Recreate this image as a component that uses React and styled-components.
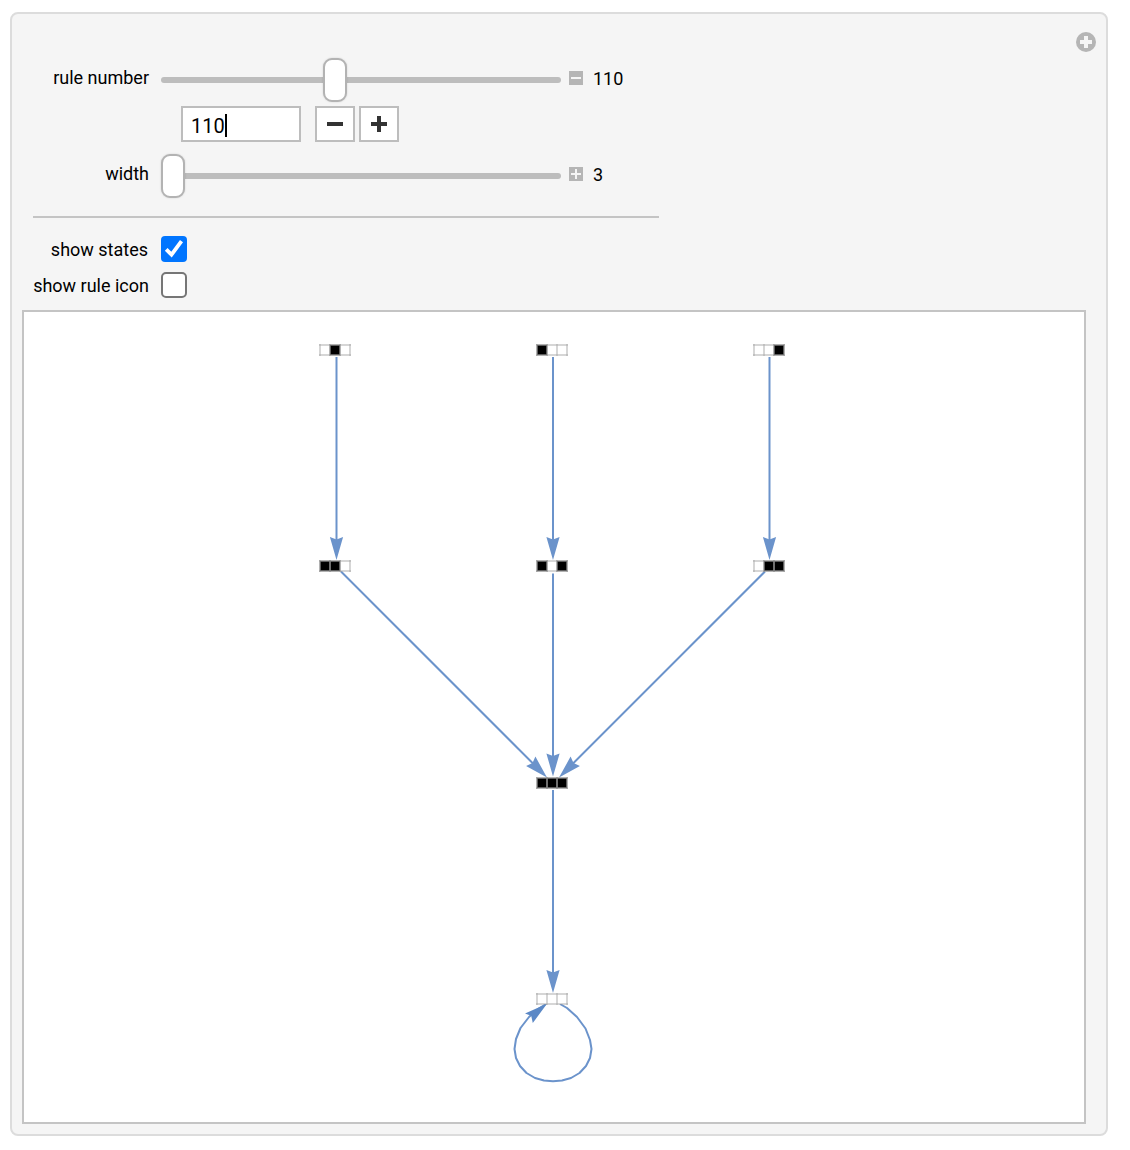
import React, { useState } from "react";
import styled, { createGlobalStyle } from "styled-components";

const GlobalStyle = createGlobalStyle`
  * { box-sizing: border-box; }
  body {
    margin: 0;
    background: #fff;
    color: #000;
    font-family: Roboto, "Liberation Sans", sans-serif;
    font-size: 18px;
  }
`;

const Panel = styled.main`
  width: 1098px;
  height: 1124px;
  margin: 12px 0 0 10px;
  padding: 44px 20px 0 10px;
  background: #f5f5f5;
  border: 2px solid #dcdcdc;
  border-radius: 8px;
`;

const Top = styled.div`
  display: flex;
  justify-content: space-between;
  align-items: flex-start;
  height: 252px;
  padding-left: 11px;
`;

const Controls = styled.div`
  width: 626px;
`;

const Row = styled.div`
  display: flex;
  align-items: center;
  height: ${(p) => p.$height}px;
  margin-bottom: ${(p) => p.$gap}px;
`;

const Label = styled.label`
  width: 116px;
  margin-right: 12px;
  padding-top: ${(p) => p.$drop || 0}px;
  padding-right: ${(p) => p.$inset || 0}px;
  text-align: right;
  line-height: 20px;
  margin-bottom: ${(p) => p.$lift || 0}px;
  white-space: nowrap;
`;

const Track = styled.div`
  display: flex;
  align-items: center;
  width: 400px;
  height: 6px;
  padding-left: ${(p) => p.$offset}px;
  background: #bdbdbd;
  border-radius: 3px;
`;

const Thumb = styled.div`
  width: 24px;
  height: 44px;
  flex: none;
  background: #fff;
  border: 2px solid #b3b3b3;
  border-radius: 9px;
  box-shadow: 0 0 2px rgba(0, 0, 0, 0.15);
`;

const Toggle = styled.svg`
  width: 14px;
  height: 14px;
  margin: 0 10px 4px 8px;
  background: #b5b5b5;
`;

const Value = styled.span`
  line-height: 20px;
  margin-bottom: 2px;
`;

const Field = styled.div`
  display: flex;
  align-items: center;
  width: 120px;
  height: 36px;
  margin: 0 14px 0 148px;
  padding: 3px 0 0 8px;
  background: #fff;
  border: 2px solid #bdbdbd;
  font-size: 20px;
`;

const Caret = styled.i`
  width: 2px;
  height: 23px;
  background: #000;
`;

const StepButton = styled.button`
  display: flex;
  align-items: center;
  justify-content: center;
  width: 40px;
  height: 36px;
  margin-right: 4px;
  padding: 0;
  background: #fff;
  border: 2px solid #bdbdbd;
`;

const Rule = styled.hr`
  height: 2px;
  margin: 0 0 18px;
  border: 0;
  background: #c4c4c4;
`;

const Check = styled.button`
  display: flex;
  width: 26px;
  height: 26px;
  padding: 0;
  border: ${(p) => (p.$on ? "0" : "2px solid #767676")};
  border-radius: ${(p) => (p.$on ? 4 : 5)}px;
  background: ${(p) => (p.$on ? "#0075ff" : "#fff")};
`;

const Menu = styled.svg`
  width: 20px;
  height: 20px;
  margin: -26px -10px 0 0;
`;

const Output = styled.section`
  width: 1064px;
  height: 814px;
  border: 2px solid #c4c4c4;
  background: #fff;
`;

const Graph = styled.svg`
  display: block;
`;

const BLUE = "#6b93cb";

const STATES = [
  { x: 335, y: 350, bits: [0, 1, 0] },
  { x: 552, y: 350, bits: [1, 0, 0] },
  { x: 769, y: 350, bits: [0, 0, 1] },
  { x: 335, y: 566, bits: [1, 1, 0] },
  { x: 552, y: 566, bits: [1, 0, 1] },
  { x: 769, y: 566, bits: [0, 1, 1] },
  { x: 552, y: 783, bits: [1, 1, 1] },
  { x: 552, y: 999, bits: [0, 0, 0] },
];

const EDGES = [
  [336.5, 357, 336.5, 560],
  [553, 357, 553, 560],
  [769.5, 357, 769.5, 560],
  [341, 571.5, 547, 777.5],
  [553, 573.5, 553, 776.5],
  [765, 571.5, 559, 777.5],
  [553, 790, 553, 993],
];

function Edge({ points: [x1, y1, x2, y2] }) {
  const angle = (Math.atan2(y2 - y1, x2 - x1) * 180) / Math.PI;
  const length = Math.hypot(x2 - x1, y2 - y1);
  return (
    <g transform={`translate(${x2} ${y2}) rotate(${angle})`}>
      <path d={`M${-length} 0H-18`} stroke={BLUE} strokeWidth="2" />
      <path d="M0 0L-23 -6.6L-20.5 0L-23 6.6Z" fill={BLUE} />
    </g>
  );
}

function State({ x, y, bits }) {
  return (
    <g>
      <rect x={x - 15} y={y - 5} width="30" height="10" fill="#fff" />
      {bits.map((bit, i) =>
        bit ? <rect key={i} x={x - 15 + i * 10} y={y - 5} width="10" height="10" fill="#000" /> : null
      )}
      <path
        d={`M${x - 15} ${y - 5}h30v10h-30zM${x - 5} ${y - 5}v10M${x + 5} ${y - 5}v10`}
        fill="none"
        stroke="#999"
        strokeOpacity="0.4"
        strokeWidth="2"
      />
      {[-15, -5, 5, 15].map((dx) =>
        [-5, 5].map((dy) => (
          <rect
            key={`${dx} ${dy}`}
            x={x + dx - 1}
            y={y + dy - 1}
            width="2"
            height="2"
            fill="#999"
            fillOpacity="0.35"
          />
        ))
      )}
      {bits.map((bit, i) =>
        bit ? (
          <rect
            key={i}
            x={x - 15 + i * 10}
            y={y - 5}
            width="10"
            height="10"
            fill="none"
            stroke="#888"
            strokeOpacity="0.45"
            strokeWidth="2"
          />
        ) : null
      )}
    </g>
  );
}

function SliderRow({ label, value, offset, expanded, gap }) {
  return (
    <Row $height={44} $gap={gap}>
      <Label $lift={4}>{label}</Label>
      <Track $offset={offset}>
        <Thumb />
      </Track>
      <Toggle viewBox="0 0 14 14">
        <path d={expanded ? "M2 7h10" : "M2 7h10M7 2v10"} stroke="#f5f5f5" strokeWidth="2" />
      </Toggle>
      <Value>{value}</Value>
    </Row>
  );
}

function CheckRow({ label, initial, gap, inset }) {
  const [on, setOn] = useState(initial);
  return (
    <Row $height={26} $gap={gap}>
      <Label $inset={inset} $drop={2}>
        {label}
      </Label>
      <Check $on={on} role="checkbox" aria-checked={on} aria-label={label} onClick={() => setOn(!on)}>
        {on && (
          <svg width="26" height="26" viewBox="0 0 26 26">
            <path d="M5.2 13.4L10.5 18.7L20.5 5.2" fill="none" stroke="#fff" strokeWidth="3.8" />
          </svg>
        )}
      </Check>
    </Row>
  );
}

export default function App() {
  return (
    <>
      <GlobalStyle />
      <Panel>
        <Top>
          <Controls>
            <SliderRow label="rule number" value="110" offset={162} expanded gap={4} />
            <Row $height={36} $gap={12}>
              <Field>
                110
                <Caret />
              </Field>
              <StepButton aria-label="decrease">
                <svg width="16" height="16" viewBox="0 0 16 16">
                  <path d="M0 8h16" stroke="#333" strokeWidth="4" />
                </svg>
              </StepButton>
              <StepButton aria-label="increase">
                <svg width="16" height="16" viewBox="0 0 16 16">
                  <path d="M0 8h16M8 0v16" stroke="#333" strokeWidth="4" />
                </svg>
              </StepButton>
            </Row>
            <SliderRow label="width" value="3" offset={0} gap={18} />
            <Rule />
            <CheckRow label="show states" initial gap={10} inset={1} />
            <CheckRow label="show rule icon" initial={false} gap={0} />
          </Controls>
          <Menu viewBox="0 0 20 20">
            <circle cx="10" cy="10" r="10" fill="#b5b5b5" />
            <path d="M4 10h12M10 4v12" stroke="#f5f5f5" strokeWidth="4" />
          </Menu>
        </Top>
        <Output>
          <Graph width="1060" height="810" viewBox="24 312 1060 810">
            {EDGES.map((points, i) => (
              <Edge key={i} points={points} />
            ))}
            <path
              d="M560 1004L567 1008L577 1017L585.5 1028.5L590 1040L591.5 1049L590 1058L586 1066L579.5 1073L571 1078L562 1080.5L553 1081.2L544 1080.5L535 1078L526.5 1073L520 1066L516 1058L514.5 1049L516 1039L520.5 1028L529 1017L538 1009L546 1004"
              fill="none"
              stroke={BLUE}
              strokeWidth="2"
              strokeLinejoin="round"
            />
            <path d="M547 1003.8L525 1013.5L531.2 1015.8L532.8 1023Z" fill="#5b88c6" />
            {STATES.map((state, i) => (
              <State key={i} {...state} />
            ))}
          </Graph>
        </Output>
      </Panel>
    </>
  );
}
